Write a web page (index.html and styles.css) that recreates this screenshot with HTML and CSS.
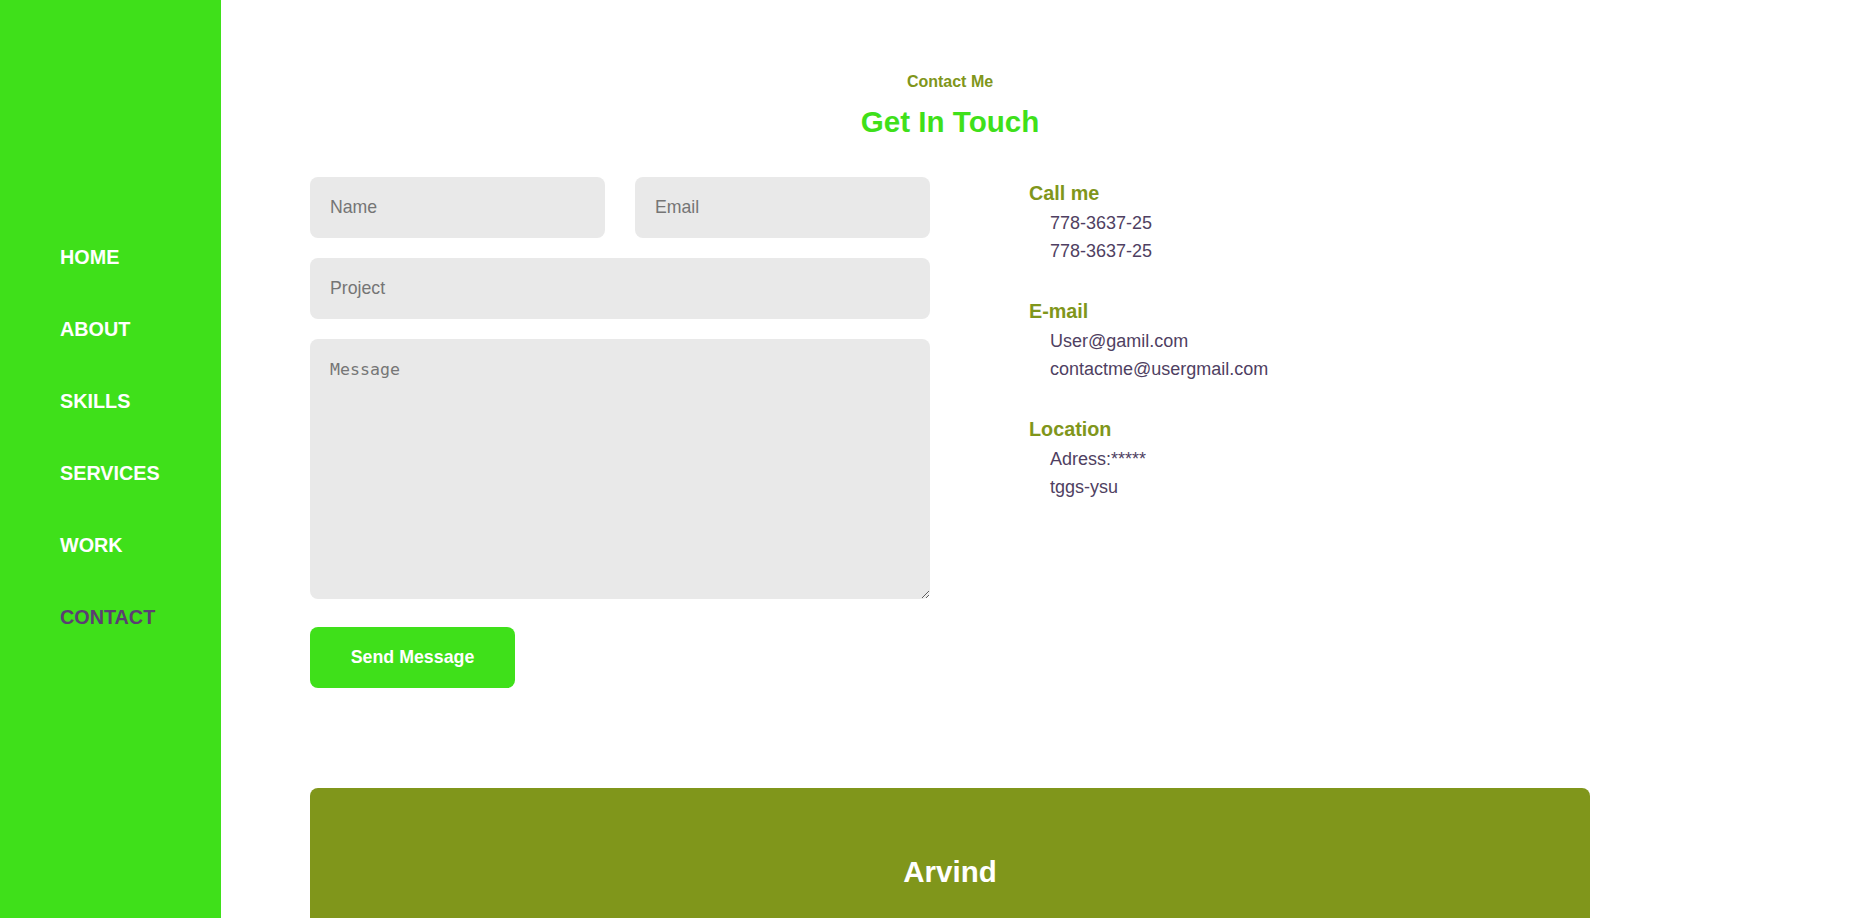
FILE: index.html
```html
<!DOCTYPE html>
<html lang="en">
<head>
<meta charset="utf-8">
<title>Contact</title>
<link rel="stylesheet" href="styles.css">
</head>
<body>
<div class="page">
  <aside class="sidebar">
    <nav>
      <ul class="nav-list">
        <li><a class="nav-link" href="#home">HOME</a></li>
        <li><a class="nav-link" href="#about">ABOUT</a></li>
        <li><a class="nav-link" href="#skills">SKILLS</a></li>
        <li><a class="nav-link" href="#services">SERVICES</a></li>
        <li><a class="nav-link" href="#work">WORK</a></li>
        <li><a class="nav-link active" href="#contact">CONTACT</a></li>
      </ul>
    </nav>
  </aside>
  <main class="main">
    <div class="container">
      <section class="contact" id="contact">
        <span class="section-subtitle">Contact Me</span>
        <h2 class="section-title">Get In Touch</h2>
        <div class="contact-body">
          <form class="form">
            <div class="form-row">
              <input class="field" type="text" placeholder="Name">
              <input class="field" type="email" placeholder="Email">
            </div>
            <input class="field" type="text" placeholder="Project">
            <textarea class="field field-area" placeholder="Message"></textarea>
            <button class="btn" type="button">Send Message</button>
          </form>
          <div class="info">
            <div class="info-item">
              <h3 class="info-title">Call me</h3>
              <p class="info-text">778-3637-25</p>
              <p class="info-text">778-3637-25</p>
            </div>
            <div class="info-item">
              <h3 class="info-title">E-mail</h3>
              <p class="info-text">User@gamil.com</p>
              <p class="info-text">contactme@usergmail.com</p>
            </div>
            <div class="info-item">
              <h3 class="info-title">Location</h3>
              <p class="info-text">Adress:*****</p>
              <p class="info-text">tggs-ysu</p>
            </div>
          </div>
        </div>
      </section>
      <footer class="footer">
        <p class="footer-title">Arvind</p>
      </footer>
    </div>
  </main>
</div>
</body>
</html>
```
FILE: styles.css
```css
* {
  box-sizing: border-box;
  margin: 0;
  padding: 0;
}

html, body {
  height: 100%;
}

body {
  font-family: "Liberation Sans", Arial, sans-serif;
  background: #ffffff;
  overflow: hidden;
}

.page {
  display: flex;
  height: 100vh;
}

.sidebar {
  width: 221px;
  flex: none;
  background: #3fe01a;
  padding: 245px 0 0 60px;
}

.nav-list {
  list-style: none;
  display: flex;
  flex-direction: column;
  gap: 48px;
}

.nav-link {
  display: block;
  font-size: 19.8px;
  line-height: 24px;
  font-weight: 700;
  color: #ffffff;
  text-decoration: none;
}

.nav-link.active {
  color: #5b3f72;
}

.main {
  flex: 1;
  padding-left: 89px;
}

.container {
  width: 1280px;
}

.contact {
  padding-top: 72px;
}

.section-subtitle {
  display: block;
  text-align: center;
  font-size: 16px;
  line-height: 20px;
  font-weight: 700;
  color: #80961b;
}

.section-title {
  text-align: center;
  font-size: 29.6px;
  line-height: 34px;
  font-weight: 700;
  color: #3fe01a;
  margin-top: 13px;
}

.contact-body {
  display: grid;
  grid-template-columns: 620px 1fr;
  column-gap: 99px;
  margin-top: 38px;
  align-items: start;
}

.form {
  display: flex;
  flex-direction: column;
  gap: 20px;
}

.form-row {
  display: grid;
  grid-template-columns: 1fr 1fr;
  column-gap: 30px;
}

.field {
  display: block;
  width: 100%;
  height: 61px;
  border: none;
  border-radius: 8px;
  background: #e9e9e9;
  padding: 0 20px;
  font-family: inherit;
  font-size: 17.7px;
  color: #333;
  outline: none;
}

.field::placeholder {
  color: #757575;
}

.field-area {
  height: 260px;
  padding: 21px 20px;
  font-family: "DejaVu Sans Mono", "Liberation Mono", monospace;
  font-size: 16.6px;
}

.field-area::placeholder {
  color: #767676;
}

.btn {
  margin-top: 8px;
  width: 205px;
  height: 61px;
  border: none;
  border-radius: 8px;
  background: #3fe01a;
  color: #ffffff;
  font-family: inherit;
  font-size: 17.8px;
  font-weight: 700;
  cursor: pointer;
}

.info {
  padding-top: 1px;
  display: flex;
  flex-direction: column;
  gap: 31px;
}

.info-title {
  font-size: 19.8px;
  line-height: 31px;
  font-weight: 700;
  color: #80961b;
}

.info-text {
  font-size: 18px;
  line-height: 28px;
  color: #4f3f62;
  padding-left: 21px;
}

.footer {
  margin-top: 100px;
  background: #80961b;
  border-radius: 8px 8px 0 0;
  padding: 67px 0 29px;
  text-align: center;
}

.footer-title {
  font-size: 29.5px;
  line-height: 34px;
  font-weight: 700;
  color: #ffffff;
}
```
